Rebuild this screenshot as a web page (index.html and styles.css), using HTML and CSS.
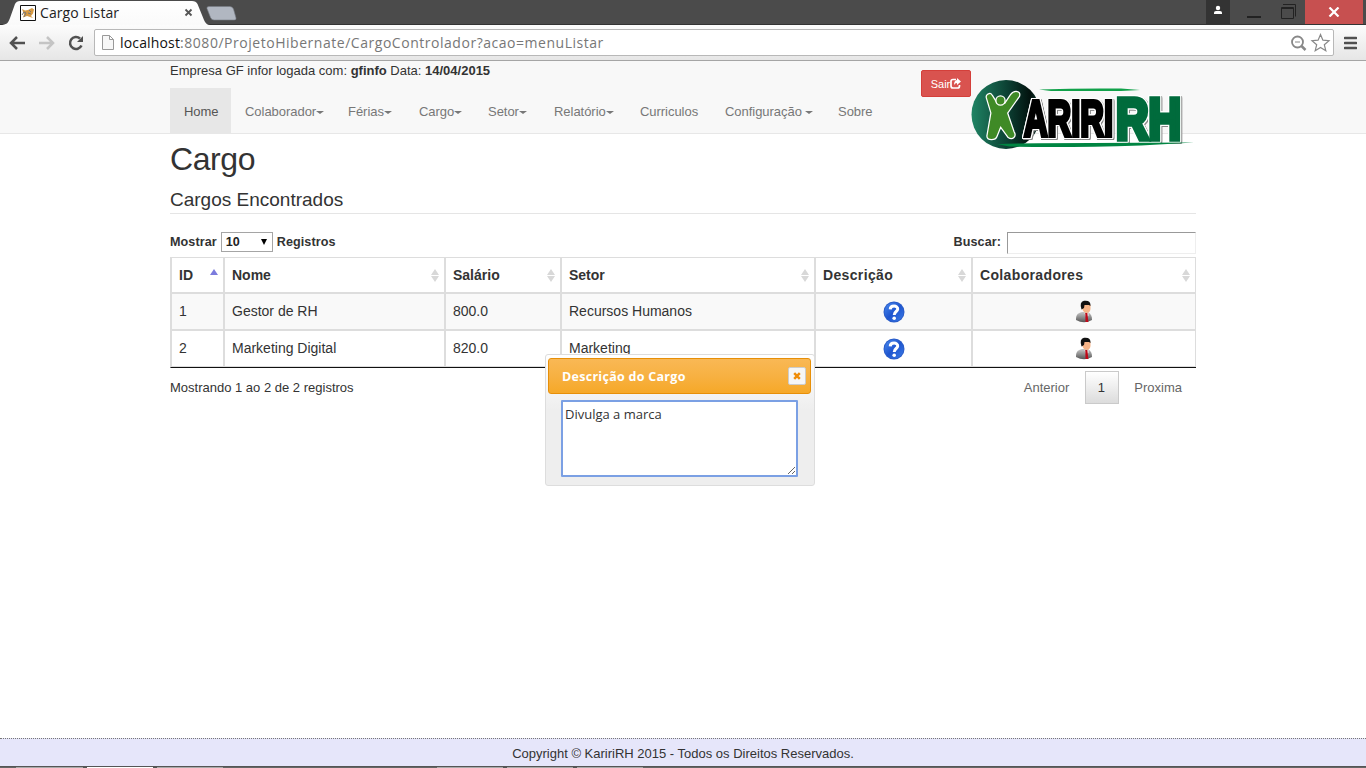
FILE: index.html
```html
<!DOCTYPE html>
<html lang="pt-br">
<head>
<meta charset="utf-8">
<title>Cargo Listar</title>
<link rel="stylesheet" href="styles.css">
</head>
<body>
<svg width="0" height="0" class="defs">
  <defs>
    <linearGradient id="blue" x1="0" y1="0" x2="1" y2="1"><stop offset="0" stop-color="#4a8cf0"/><stop offset=".5" stop-color="#1f55cf"/><stop offset="1" stop-color="#3b7be6"/></linearGradient>
    <linearGradient id="suit" x1="0" y1="0" x2="0" y2="1"><stop offset="0" stop-color="#c8c8c8"/><stop offset="1" stop-color="#555"/></linearGradient>
    <linearGradient id="orb"><stop offset="0" stop-color="#1f8464"/><stop offset=".55" stop-color="#0b3c30"/><stop offset=".85" stop-color="#02120e"/><stop offset="1" stop-color="#0b3c30"/></linearGradient>
    <linearGradient id="tab" x1="0" y1="0" x2="0" y2="1"><stop offset="0" stop-color="#fff"/><stop offset="1" stop-color="#fafafa"/></linearGradient>
    <symbol id="help" viewBox="0 0 22 22">
      <circle cx="11" cy="11" r="10.5" fill="#2a5cc8"/><circle cx="11" cy="11" r="9.500" fill="url(#blue)"/>
      <path d="M7.200 8.400C7.300 3.900 15 4 14.700 8.200 14.500 10.600 11.200 10.600 11.200 14" fill="none" stroke="#fff" stroke-width="3"/><circle cx="11.200" cy="17.200" r="1.800" fill="#fff"/>
    </symbol>
    <symbol id="person" viewBox="0 0 18 23">
      <path d="M1 20C1 15 2 13.500 7 12L13 12C16 14 17 16 17 20Q9 24.500 1 20Z" fill="url(#suit)"/>
      <path d="M9 12L10.500 14 13.500 12.500 13.500 16 11 17Z" fill="#eee"/>
      <path d="M10.300 13H12.300L13.400 22H10.500Z" fill="#c00818"/>
      <path d="M7 5Q11 2 15.500 5V9Q15 13 11.500 13 8 12.500 7 8Z" fill="#f6b488"/>
      <path d="M6.500 9.500Q4 2 9 .8 16 0 15.500 6L14 5H9.500L9 8Z" fill="#111"/>
    </symbol>
  </defs>
</svg>
<div class="window">
  <header class="titlebar">
    <div class="tab">
      <svg class="tabshape" width="210" height="25"><path d="M0 25C7 25 8 23 10 18L15 4Q16.500 1 20 1H192Q196 1 197.500 4L204 20Q206 25 210 25Z" fill="url(#tab)"/></svg>
      <svg class="favicon" width="16" height="16"><path d="M.5.5h15v15H.5z" fill="#fff" stroke="#111"/><path d="M2 4l3 1.500 3-.5 4-2 2 1.500-1 4-2 2.500 2 2-3-1-3-1-4 1.500 1-3z" fill="#d69a45"/><path d="M2 10l2-3 2 1-2 4M9 5l2 2M8 8l3 1" stroke="#777" fill="none"/></svg>
      <span>Cargo Listar</span>
      <svg class="tabclose" width="9" height="9"><path d="M1.500 1.500l6 6M7.500 1.500l-6 6" stroke="#555" stroke-width="1.8"/></svg>
    </div>
    <svg class="newtab" width="32" height="15"><path d="M3 .5H24Q26.500.5 27.500 3L30 12Q30.500 14 28 14H8Q5.500 14 4.500 11.500L1 2.500Q.5.5 3 .5Z" fill="#b1b7c1" stroke="#777c84" stroke-width=".6"/></svg>
    <div class="controls">
      <div class="user"><svg width="24" height="24"><circle cx="12" cy="8" r="2.200" fill="#fff"/><path d="M8 14v-1.500Q8 11 10 11h4q2 0 2 1.500V14z" fill="#fff"/></svg></div>
      <svg width="75" height="24"><path d="M17 17h14" stroke="#222" stroke-width="2"/><path d="M51.500 7.500h12v11h-12zM51 8.500h13M53 4.500h12.500v12" fill="none" stroke="#222"/></svg>
      <div class="close"><svg width="12" height="10"><path d="M1.500.5l9 9M10.500.5l-9 9" stroke="#fff" stroke-width="2.200"/></svg></div>
    </div>
  </header>
  <div class="toolbar">
    <svg width="84" height="24"><g fill="none" stroke-width="2.500"><path d="M25 12H11.500M17 6l-6 6 6 6" stroke="#505050"/><path d="M39 12h13.500M47 6l6 6-6 6" stroke="#c4c4c4"/><path d="M80 7.500A6 6 0 1 0 81.500 14.500" stroke="#505050"/></g><path d="M83 5v6h-6z" fill="#505050"/></svg>
    <div class="address">
      <svg width="12" height="15"><path d="M.5.5h7l4 4v10H.5zM7.500.5v4h4" fill="#f7f7f7" stroke="#999"/></svg>
      <p><b>localhost</b>:8080/ProjetoHibernate/CargoControlador?acao=menuListar</p>
      <svg width="42" height="20"><g fill="none" stroke="#888"><circle cx="8.500" cy="9" r="5.500" stroke-width="1.800"/><path d="M6 9h5"/><path d="M12.500 13l4 4" stroke-width="2.500"/><path d="M31.500 1.500l2.400 5.700 6.100.5-4.700 4 1.500 6-5.300-3.300-5.300 3.300 1.500-6-4.700-4 6.100-.5z" stroke-width="1.200"/></g></svg>
    </div>
    <svg class="menu" width="13" height="14"><path d="M1 2h11M1 7h11M1 12h11" stroke="#505050" stroke-width="2.700" stroke-linecap="round"/></svg>
  </div>
  <div class="navband">
    <div class="container navgrid">
      <div>
        <p class="session">Empresa GF infor logada com: <b>gfinfo</b> Data: <b>14/04/2015</b></p>
        <nav>
          <a class="active w61">Home</a><a class="w103">Colaborador<i class="caret"></i></a><a class="w71">Férias<i class="caret"></i></a><a class="w69">Cargo<i class="caret"></i></a><a class="w66">Setor<i class="caret"></i></a><a class="w86">Relatório<i class="caret"></i></a><a class="w85">Curriculos</a><a class="w113">Configuração <i class="caret"></i></a><a>Sobre</a>
        </nav>
      </div>
      <button class="logout">Sair<svg width="11" height="11"><path d="M6 1.500H3Q1 1.500 1 3.500V8Q1 10 3 10H7.500Q9.500 10 9.500 8V7" fill="none" stroke="#fff" stroke-width="1.700"/><path d="M7 0l4 3.500L7 7V5Q5 5 4 7 4 2.500 7 2z" fill="#fff"/></svg></button>
      <svg class="logo" width="224" height="72" viewBox="0 0 224 72">
        <circle cx="35" cy="34.500" r="34.500" fill="url(#orb)"/>
        <path d="M68 9.500Q110 8 150 8.500L169 10 150 11H80Z" fill="#11a14a"/>
        <g stroke-linejoin="round">
          <path d="M19 14q-4 1-3 4l4.500 15-4 23q0 3 4 3 4 0 5-3l4-10 8 11q3 2 5 0 2-2 0-5L36 33 48 16q1-4-3-4-3 0-5 3l-6 9h-8l-5-8q-1-2-2-2z" fill="#3f8a26" stroke="#fff" stroke-width="2.500" paint-order="stroke"/>
          <circle cx="29.500" cy="20.500" r="4.600" fill="#3f8a26" stroke="#fff" stroke-width="1.300"/>
        </g>
        <g class="wordmark">
          <text x="53" y="55.500" font-size="50" textLength="89" lengthAdjust="spacingAndGlyphs" stroke="#000" stroke-width="4">ARIRI</text>
          <text x="145" y="58.500" font-size="58" textLength="65" lengthAdjust="spacingAndGlyphs" fill="#006b3c" stroke="#006b3c" stroke-width="5.500">RH</text>
        </g>
        <path d="M26 64Q50 63 120 63L223 62.500 170 65.500Q90 68 38 66.500Z" fill="#008542"/>
      </svg>
    </div>
  </div>
  <main class="container">
    <h1>Cargo</h1>
    <h2>Cargos Encontrados</h2>
    <div class="filters"><label>Mostrar <span class="select">10 <i></i></span> Registros</label><label>Buscar: <input></label></div>
    <table>
      <colgroup><col class="c1"><col class="c2"><col class="c3"><col class="c4"><col class="c5"><col class="c6"></colgroup>
      <thead><tr><th class="asc">ID</th><th>Nome</th><th>Salário</th><th>Setor</th><th class="ls">Descrição</th><th class="ls">Colaboradores</th></tr></thead>
      <tbody>
        <tr><td>1</td><td>Gestor de RH</td><td>800.0</td><td>Recursos Humanos</td><td class="icon"><svg width="22" height="22"><use href="#help"/></svg></td><td class="icon"><svg width="18" height="23"><use href="#person"/></svg></td></tr>
        <tr><td>2</td><td>Marketing Digital</td><td>820.0</td><td>Marketing</td><td class="icon"><svg width="22" height="22"><use href="#help"/></svg></td><td class="icon"><svg width="18" height="23"><use href="#person"/></svg></td></tr>
      </tbody>
    </table>
    <div class="foot"><p>Mostrando 1 ao 2 de 2 registros</p><div class="pages"><span>Anterior</span><span class="current">1</span><span>Proxima</span></div></div>
  </main>
  <section class="dialog">
    <div class="dialog-title">Descrição do Cargo<span class="x"><svg width="8" height="8"><path d="M1.200 1.200l5.600 5.600M6.800 1.200l-5.600 5.600" stroke="#ef8c08" stroke-width="2.500"/></svg></span></div>
    <textarea>Divulga a marca</textarea>
  </section>
  <footer>Copyright © KaririRH 2015 - Todos os Direitos Reservados.</footer>
  <div class="taskbar"></div>
</div>
</body>
</html>
```
FILE: styles.css
```css
*{box-sizing:border-box}
body{margin:0;font:13px/20px "Liberation Sans",Arial,sans-serif;color:#333;background:#fff;overflow:hidden}
p,h1,h2{margin:0}
svg{display:block;flex:none}
.defs{position:absolute}
.window{position:relative;width:1366px;height:768px;display:flex;flex-direction:column;overflow:hidden}
.titlebar{height:25px;flex:none;background:#4b4b4b;border-bottom:1px solid #333;display:flex}
.tab{position:relative;width:205px;height:25px;display:flex;align-items:center;padding:0 0 0 20px;font:14px "Open Sans",sans-serif;color:#222;gap:4px}
.tab>span{width:140px;white-space:nowrap;z-index:1;letter-spacing:.1px}
.tabshape{position:absolute;left:0;top:0}
.favicon,.tabclose{z-index:1}
.newtab{margin:6px 0 0 1px}
.controls{margin-left:auto;display:flex;height:24px}
.user{background:#333;width:24px}
.close{background:#c75050;width:58px;margin-right:3px;display:flex;align-items:center;justify-content:center}
.toolbar{height:36px;flex:none;background:linear-gradient(#fcfcfc,#e6e6e6);border-bottom:1px solid #a5a5a5;display:flex;align-items:center}
.address{width:1240px;height:27px;margin-left:10px;background:#fff;border:1px solid #b8b8b8;border-radius:2px;display:flex;align-items:center;padding:0 2px 0 7px}
.address p{font:14px "Open Sans",sans-serif;color:#777;margin-left:6px;flex:1;white-space:nowrap;letter-spacing:.53px}
.address b{font-weight:400;color:#111;letter-spacing:.16px}
.menu{margin-left:10px}
.container{width:1026px;margin:0 170px}
.navband{height:73px;flex:none;background:#f8f8f8;border-bottom:1px solid #e7e7e7}
.navgrid{display:grid;grid-template-columns:751px 50px 225px;height:72px}
.session{height:27px;white-space:nowrap}
nav{display:flex;color:#777}
nav a{height:45px;padding:14px 0 0 14px;white-space:nowrap;flex:none;letter-spacing:-.04px}
nav .active{background:#e7e7e7;color:#555}
.w61{width:61px}.w103{width:103px}.w71{width:71px}.w69{width:69px}.w66{width:66px}.w86{width:86px}.w85{width:85px}.w113{width:113px}
.caret{display:inline-block;vertical-align:middle;border:4px solid transparent;border-top:3px solid #777;border-bottom:0}
.logout{margin-top:9px;width:50px;height:27px;background:#d9534f;border:1px solid #d43f3a;border-radius:2px;color:#fff;font:11px "Liberation Sans",sans-serif;display:flex;align-items:center;justify-content:center;padding:0}
.logo{margin-top:19px;z-index:2}
.wordmark{font-family:"Liberation Sans Narrow","Liberation Sans",sans-serif;font-weight:700;filter:drop-shadow(1px 0 0 #fff) drop-shadow(-1px 0 0 #fff) drop-shadow(0 1px 0 #fff) drop-shadow(0 -1px 0 #fff) drop-shadow(1.500px 1px .5px #888)}
main{height:604px;flex:none}
h1{font-weight:400;font-size:32px;line-height:36px;height:55px;padding-top:7px;letter-spacing:-.4px}
h2{font-weight:400;font-size:19px;line-height:21px;height:25px;border-bottom:1px solid #e5e5e5}
.filters{display:flex;justify-content:space-between;height:43px;padding-top:18px;font-weight:700;font-size:12.600px}
.filters label{display:flex;align-items:center;height:20px;gap:4px;letter-spacing:.08px}
.select{width:52px;height:20px;border:1px solid #a5a5a5;display:flex;align-items:center;justify-content:space-between;padding:0 5px 0 4px;color:#222;letter-spacing:0}
.select i{border:3.500px solid transparent;border-top:6px solid #000;border-bottom:0}
.filters input{width:189px;height:22px;margin:2px 0 0 2px;border:1px solid #eee;border-top-color:#999;border-left-color:#999}
table{width:1026px;table-layout:fixed;border-collapse:separate;border-spacing:0;border-bottom:1px solid #111;border-left:1px solid #ddd;font-size:14px}
.c1{width:53px}.c2{width:221px}.c3{width:116px}.c4{width:254px}.c5{width:157px}
th,td{border:1px solid #ddd;padding:0 7px;text-align:left;height:37px}
td{padding-bottom:2px}
th{position:relative;height:36px}
.ls{letter-spacing:.35px}
th::before,th::after{content:"";position:absolute;right:5px;border:4px solid transparent}
th::before{top:7px;border-bottom:6px solid #d8d8d8}
th::after{top:18px;border-top:6px solid #d8d8d8}
th.asc::before{border-bottom-color:#7c7cdd}
th.asc::after{display:none}
tbody tr:first-child{background:#f9f9f9}
td.icon{padding-bottom:0}
.icon svg{margin:auto}
.foot{display:flex;justify-content:space-between;height:39px}
.foot p{padding-top:10px}
.pages{display:flex;color:#666;padding-top:3px}
.pages span{padding:7px 14px 6px;height:33px}
.pages .current{width:34px;margin:0 1px 0 2px;padding:6px 2px 6px 0;text-align:center;color:#333;border:1px solid #cacaca;background:linear-gradient(#fff,#dcdcdc)}
.dialog{position:absolute;left:545px;top:354px;width:270px;height:132px;border:1px solid #ddd;border-radius:3px;background:linear-gradient(#fff,#eee 55px);padding:3px 3px 0 2px}
.dialog-title{height:36px;border:1px solid #e78f08;border-radius:3px;background:linear-gradient(#f9b855,#f7b142 50%,#f6a828);color:#fff;font:bold 12.500px "Open Sans",sans-serif;letter-spacing:.28px;display:flex;align-items:center;justify-content:space-between;padding:0 4px 0 13px}
.x{width:18px;height:18px;border:1px solid #ccc;border-radius:2px;background:#f6f6f6;display:flex;align-items:center;justify-content:center}
textarea{display:block;width:237px;height:77px;margin:6px 0 0 13px;border:2px solid #7ba0e4;border-radius:1px;padding:2px;background:#fff;color:#333;font:13px/20px "Open Sans",sans-serif;outline:none}
footer{height:28px;flex:none;background:#e6e6fa;border-top:1px dotted #777;text-align:center;padding-top:5px;white-space:nowrap}
.taskbar{height:2px;flex:none;background:linear-gradient(90deg,#666 0 16px,#aaa 16px 83px,#555 83px 87px,#fff 87px 153px,#555 153px 157px,#aaa 157px 223px,#666 223px 437px,#aaa 437px 503px,#555 503px 507px,#aaa 507px 573px,#555 573px 577px,#aaa 577px 643px,#666 643px);border-top:1px solid #555}
```
